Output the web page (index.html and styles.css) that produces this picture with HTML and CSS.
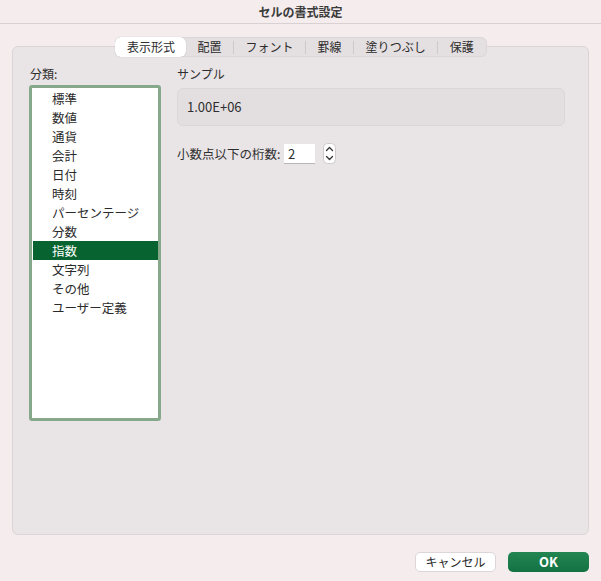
FILE: index.html
```html
<!DOCTYPE html>
<html lang="ja">
<head>
<meta charset="utf-8">
<title>セルの書式設定</title>
<link rel="stylesheet" href="styles.css">
</head>
<body>
<div class="window">
  <div class="titlebar">セルの書式設定</div>
  <div class="tabbar">
    <div class="tab active">表示形式</div>
    <div class="tab">配置</div>
    <div class="sep"></div>
    <div class="tab">フォント</div>
    <div class="sep"></div>
    <div class="tab">罫線</div>
    <div class="sep"></div>
    <div class="tab">塗りつぶし</div>
    <div class="sep"></div>
    <div class="tab">保護</div>
  </div>
  <div class="panel">
    <div class="leftcol">
      <div class="label">分類:</div>
      <div class="listbox">
        <div class="item">標準</div>
        <div class="item">数値</div>
        <div class="item">通貨</div>
        <div class="item">会計</div>
        <div class="item">日付</div>
        <div class="item">時刻</div>
        <div class="item">パーセンテージ</div>
        <div class="item">分数</div>
        <div class="item selected">指数</div>
        <div class="item">文字列</div>
        <div class="item">その他</div>
        <div class="item">ユーザー定義</div>
      </div>
    </div>
    <div class="rightcol">
      <div class="label">サンプル</div>
      <div class="sample">1.00E+06</div>
      <div class="decrow">
        <span class="declabel">小数点以下の桁数:</span>
        <div class="decinput">2</div>
        <svg class="stepper" width="13" height="21" viewBox="0 0 13 21">
          <rect x="0.5" y="0.5" width="12" height="20" rx="4" fill="#ffffff" stroke="#cfc9cb"/>
          <path d="M3.5 7.5 L6.5 4.5 L9.5 7.5" fill="none" stroke="#333" stroke-width="1.3" stroke-linecap="round" stroke-linejoin="round"/>
          <path d="M3.5 13.5 L6.5 16.5 L9.5 13.5" fill="none" stroke="#333" stroke-width="1.3" stroke-linecap="round" stroke-linejoin="round"/>
        </svg>
      </div>
    </div>
  </div>
  <div class="footer">
    <div class="btn cancel">キャンセル</div>
    <div class="btn ok">OK</div>
  </div>
</div>
</body>
</html>
```
FILE: styles.css
```css
html, body {
  margin: 0;
  padding: 0;
}
body {
  width: 601px;
  height: 581px;
  background: #f5eced;
  font-family: "Noto Sans CJK JP", "Noto Sans", sans-serif;
  font-size: 12px;
  color: #2e2e2e;
  overflow: hidden;
}
.window {
  display: flex;
  flex-direction: column;
}
.titlebar {
  height: 24px;
  line-height: 23px;
  text-align: center;
  font-weight: bold;
  color: #3b3b3b;
  border-bottom: 1px solid #d8d0d2;
  box-sizing: border-box;
}
.tabbar {
  align-self: flex-start;
  margin-left: 115px;
  margin-top: 13px;
  height: 20px;
  display: flex;
  align-items: center;
  background: #e4dfe1;
  border: 1px solid #dcd6d8;
  border-radius: 6px;
  box-sizing: border-box;
  position: relative;
  z-index: 1;
  padding: 0 1px 0 0;
}
.tab {
  height: 20px;
  line-height: 19px;
  padding: 0 11.5px;
  color: #2c2c2c;
  box-sizing: border-box;
}
.tab.active {
  background: #ffffff;
  border-radius: 6px;
  height: 20px;
  margin: -1px 0 -1px -1px;
  padding: 0 11px 0 12px;
  box-shadow: 0 0 1px rgba(0,0,0,0.25);
}
.sep {
  width: 1px;
  height: 13px;
  background: #cfc9cb;
}
.panel {
  margin: -11px 12px 0 12px;
  height: 489px;
  box-sizing: border-box;
  background: #e9e4e6;
  border: 1px solid #dbd5d7;
  border-radius: 6px;
  padding: 19px 23px 0 16px;
  display: flex;
  gap: 16px;
}
.leftcol {
  width: 132px;
  display: flex;
  flex-direction: column;
}
.label {
  height: 15px;
  line-height: 15px;
  margin-bottom: 4px;
  padding-left: 1px;
}
.listbox {
  height: 336px;
  box-sizing: border-box;
  border: 3px solid #86a98c;
  border-radius: 3px;
  background: #ffffff;
  padding: 1px 0 0 1px;
}
.item {
  height: 19px;
  line-height: 19px;
  padding-left: 19px;
  color: #2a2a2a;
  font-size: 12.5px;
}
.item.selected {
  background: #07632f;
  color: #ffffff;
}
.rightcol {
  flex: 1;
  display: flex;
  flex-direction: column;
}
.rightcol .label {
  margin-bottom: 7px;
  padding-left: 0;
}
.sample {
  height: 38px;
  box-sizing: border-box;
  background: #e3dfe1;
  border: 1px solid #dbd7d9;
  border-radius: 6px;
  line-height: 36px;
  padding-left: 9px;
  font-size: 13px;
}
.decrow {
  margin-top: 17px;
  display: flex;
  align-items: center;
  height: 21px;
}
.declabel {
  width: 107px;
  font-size: 12.5px;
}
.decinput {
  width: 31px;
  height: 20px;
  box-sizing: border-box;
  background: #ffffff;
  border-bottom: 1px solid #b9b4b6;
  line-height: 20px;
  padding-left: 4px;
  font-size: 13px;
}
.stepper {
  margin-left: 8px;
}
.footer {
  display: flex;
  justify-content: flex-end;
  gap: 12px;
  padding: 17px 12px 0 0;
}
.btn {
  width: 81px;
  height: 20px;
  box-sizing: border-box;
  border-radius: 5px;
  text-align: center;
  line-height: 20px;
}
.cancel {
  background: #ffffff;
  border: 1px solid #dcd6d8;
  line-height: 18px;
  color: #2a2a2a;
}
.ok {
  background: linear-gradient(#238552, #137242);
  color: #ffffff;
  font-weight: bold;
  font-size: 13px;
}
```
